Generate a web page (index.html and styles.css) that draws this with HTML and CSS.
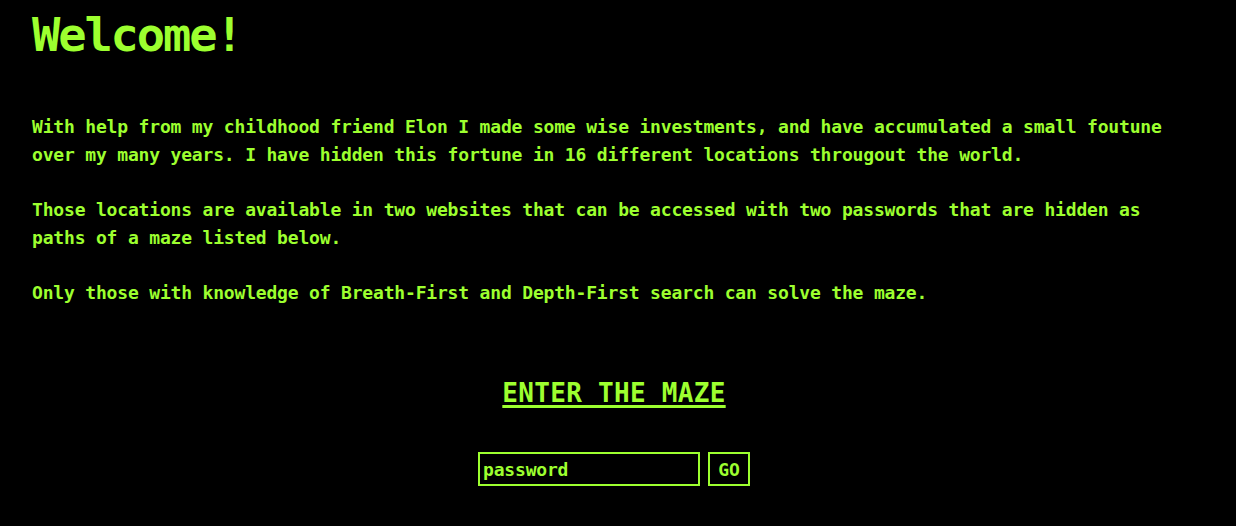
FILE: index.html
```html
<!DOCTYPE html>
<html lang="en">
<head>
<meta charset="utf-8">
<title>Welcome!</title>
<link rel="stylesheet" href="styles.css">
</head>
<body>
<main class="page">
  <h1 class="title">Welcome!</h1>
  <p class="text">With help from my childhood friend Elon I made some wise investments, and have accumulated a small foutune over my many years. I have hidden this fortune in 16 different locations througout the world.</p>
  <p class="text">Those locations are available in two websites that can be accessed with two passwords that are hidden as paths of a maze listed below.</p>
  <p class="text">Only those with knowledge of Breath-First and Depth-First search can solve the maze.</p>
  <div class="enter"><a class="enter-link" href="#">ENTER THE MAZE</a></div>
  <form class="login">
    <input class="pw" type="text" placeholder="password">
    <button class="go" type="button">GO</button>
  </form>
</main>
</body>
</html>
```
FILE: styles.css
```css
html, body {
  margin: 0;
  padding: 0;
  background: #000;
}
body {
  color: #9dff2f;
  font-family: "DejaVu Sans Mono", "Liberation Mono", monospace;
  font-weight: bold;
}
.page {
  padding: 10px 40px 0 32px;
}
.title {
  margin: 0 0 53px 0;
  font-size: 47px;
  line-height: 50px;
  letter-spacing: -2.1px;
  font-weight: bold;
}
.text {
  margin: 0 0 27px 0;
  font-size: 18px;
  line-height: 28px;
  letter-spacing: -0.18px;
}
.enter {
  margin-top: 68px;
  text-align: center;
  line-height: 36px;
}
.enter-link {
  color: #9dff2f;
  font-size: 26px;
  letter-spacing: 0.3px;
  text-decoration: underline;
  text-decoration-thickness: 3px;
  text-underline-offset: 3px;
}
.login {
  margin-top: 37px;
  display: flex;
  justify-content: center;
  gap: 8px;
}
.pw {
  box-sizing: border-box;
  width: 222px;
  height: 34px;
  background: #000;
  border: 2px solid #9dff2f;
  color: #9dff2f;
  padding: 0 3px;
  font-family: inherit;
  font-weight: bold;
  font-size: 18px;
  letter-spacing: -0.18px;
  outline: none;
}
.pw::placeholder {
  color: #9dff2f;
  opacity: 1;
}
.go {
  box-sizing: border-box;
  width: 42px;
  height: 34px;
  background: #000;
  border: 2px solid #9dff2f;
  color: #9dff2f;
  font-family: inherit;
  font-weight: bold;
  font-size: 18px;
  padding: 0;
}
```
